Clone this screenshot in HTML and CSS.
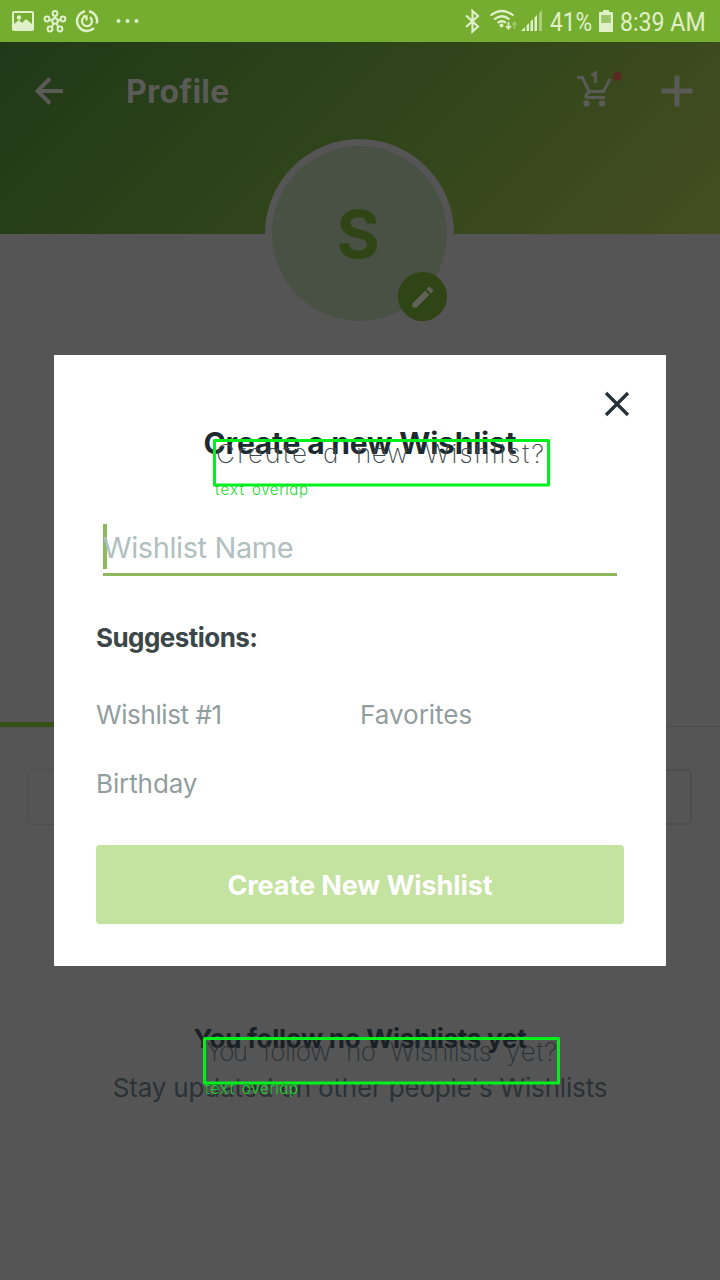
FILE: index.html
```html
<!DOCTYPE html>
<html lang="en">
<head>
<meta charset="utf-8">
<title>Profile</title>
<link rel="stylesheet" href="styles.css">
</head>
<body>
<div class="screen">
  <div class="statusbar">
    <svg class="status-left" width="145" height="42" viewBox="0 0 145 42">
      <g fill="none" stroke="currentColor" stroke-width="2">
        <rect x="13" y="12" width="20" height="18" rx="1"/>
        <circle cx="55" cy="21" r="2.8"/><circle cx="55" cy="13.500" r="2.400"/><circle cx="47" cy="19" r="2.400"/><circle cx="63" cy="19" r="2.400"/><circle cx="50" cy="29" r="2.400"/><circle cx="60" cy="29" r="2.400"/>
        <path d="M55 16v2M49.500 20l3 .5M60.500 20l-3 .5M51.500 27l2-3M58.500 27l-2-3"/>
        <path d="M85 11.200a10 10 0 1 0 9 17M89 11.200a10 10 0 0 1 7.800 12.300" stroke-width="2.500"/>
        <path d="M83.500 17.500a5 5 0 1 0 6.500-.3M83 16.500h3.500v4" stroke-width="2.300"/>
      </g>
      <path fill="currentColor" d="M14 28v-4l5-4 3 3 4-4 6 5v5H14z"/><circle cx="19" cy="17.500" r="2.200" fill="currentColor"/>
      <g fill="currentColor"><circle cx="118.500" cy="21" r="2"/><circle cx="127.500" cy="21" r="2"/><circle cx="136.500" cy="21" r="2"/></g>
    </svg>
    <div class="status-right">
      <svg width="80" height="42" viewBox="464 0 80 42">
        <path d="M466 15.500l12 11-5.500 5V11l5.500 5-12 11" fill="none" stroke="currentColor" stroke-width="2.200"/>
        <g fill="none" stroke="currentColor" stroke-width="2.200"><path d="M490.500 15.500q11.500-9 23 0M494 19.500q8-6.500 15.500 0M497.500 23q4.500-3.500 8.500 0"/></g>
        <circle cx="501.500" cy="25.500" r="1.900" fill="currentColor"/>
        <path d="M508.500 22v6M506 26l2.500 2.700L511 26" fill="none" stroke="currentColor" stroke-width="1.700"/>
        <path d="M514.500 29v-6M512.300 25l2.200-2.500 2.200 2.500" fill="none" stroke="currentColor" opacity=".4" stroke-width="1.500"/>
        <path fill="currentColor" d="M521 31l4-4v4zM526.500 25.500l2.500-2.500v8h-2.500zM530.500 21.500l2.500-2.500v12h-2.500zM534.500 17.500l2.500-2.500v16h-2.500z"/><path fill="currentColor" opacity=".5" d="M539 13l3-3v21h-3z"/>
      </svg>
      <span class="battery-text">41%</span>
      <svg class="battery" width="14" height="22" viewBox="0 0 14 22"><path fill="currentColor" d="M4 0h6v2h3a1 1 0 0 1 1 1v18a1 1 0 0 1-1 1H1a1 1 0 0 1-1-1V3a1 1 0 0 1 1-1h3z"/><path fill="#9cc56b" d="M2.200 5h9.600v8H2.200z"/></svg>
      <span class="clock">8:39 AM</span>
    </div>
  </div>

  <header class="header">
    <svg class="back" width="28" height="28" viewBox="0 0 28 28"><path d="M28 14H2.500M15 1.500L2.500 14 15 26.500" fill="none" stroke="currentColor" stroke-width="4"/></svg>
    <h1 class="title">Profile</h1>
    <svg class="cart" width="46" height="40" viewBox="576 70 46 40">
      <g fill="none" stroke="currentColor" stroke-width="3"><path d="M577 77.500h5.500l6.500 14h14.500l6.500-12.500"/><path d="M589 91.500l-3 4q-.8 2 1.500 2H605"/></g>
      <path fill="none" stroke="currentColor" stroke-width="3" d="M591.500 75.500l4-2.500V83"/>
      <circle cx="586.500" cy="103.500" r="3.200" fill="currentColor"/><circle cx="602" cy="103.500" r="3.200" fill="currentColor"/>
      <circle cx="617.500" cy="76.500" r="4.500" fill="#59291f"/>
    </svg>
    <svg class="plus" width="32" height="32" viewBox="0 0 32 32"><path d="M16 0.500v31M.5 16h31" stroke="currentColor" stroke-width="5"/></svg>
  </header>

  <main class="profile">
    <div class="avatar">S
      <div class="edit"><svg width="22" height="22" viewBox="0 0 22 22"><path fill="currentColor" d="M.5 17.200V21.500h4.300L17.300 9 13 4.700zM21 5.300q.7-.8 0-1.500L18.200 1q-.8-.7-1.500 0l-2.300 2.300 4.300 4.300z"/></svg></div>
    </div>
    <div class="tabs"><div class="tab tab-on"></div><div class="tab"></div></div>
    <div class="actions"><div class="action"></div><div class="action action-strong"></div></div>
    <h2 class="empty-title"><span>You follow no Wishlists yet</span></h2>
    <p class="empty-text"><span>Stay updated on other people's Wishlists</span></p>
  </main>

  <section class="modal">
    <svg class="close" width="26" height="26" viewBox="0 0 26 26"><path d="M2 2l22 22M24 2L2 24" stroke="currentColor" stroke-width="3.300"/></svg>
    <h2 class="modal-title"><span>Create a new Wishlist</span></h2>
    <div class="field"><span>Wishlist Name</span></div>
    <h3 class="suggest-title"><span>Suggestions:</span></h3>
    <div class="suggestions"><span class="s-one">Wishlist #1</span><span class="s-two">Favorites</span><span class="s-three">Birthday</span></div>
    <div class="create"><span>Create New Wishlist</span></div>
  </section>

  <svg class="marks" width="720" height="1280" viewBox="0 0 720 1280">
    <g fill="none" stroke="#00f21c" stroke-width="3" stroke-linejoin="round"><rect x="214.500" y="440.500" width="334" height="44.500"/><rect x="204.500" y="1038.500" width="354" height="44.500"/></g>
    <g class="mark-text">
      <text y="463"><tspan x="216" textLength="91">Create</tspan> <tspan x="323" textLength="16">a</tspan> <tspan x="356" textLength="52">new</tspan> <tspan x="425" textLength="119">Wishlist?</tspan></text>
      <text y="1061"><tspan x="206" textLength="42">You</tspan> <tspan x="263" textLength="68">follow</tspan> <tspan x="346" textLength="30">no</tspan> <tspan x="390" textLength="102">Wishlists</tspan> <tspan x="506" textLength="51">yet?</tspan></text>
    </g>
    <g class="mark-label">
      <text y="495"><tspan x="215" textLength="29">text</tspan> <tspan x="252" textLength="56">overlap</tspan></text>
      <text y="1094"><tspan x="205" textLength="29">text</tspan> <tspan x="242" textLength="56">overlap</tspan></text>
    </g>
  </svg>
</div>
</body>
</html>
```
FILE: styles.css
```css
* { box-sizing: border-box; margin: 0; }
body { margin: 0; font-family: Inter, "Liberation Sans", sans-serif; }
svg { display: block; flex: none; }
.screen { position: relative; width: 720px; height: 1280px; overflow: hidden; background: #555; display: flex; flex-direction: column; }
.statusbar { height: 42px; background: #75ad30; color: #e0f0c8; display: flex; justify-content: space-between; align-items: center; flex: none; }
.status-right { display: flex; align-items: center; padding-right: 15px; font: 26px/42px Roboto, sans-serif; }
.status-right span { display: block; white-space: nowrap; padding-top: 2px; transform-origin: left center; }
.battery-text { width: 42px; margin-left: 6px; transform: scaleX(.87); }
.battery { margin: 0 7px; }
.clock { width: 85px; transform: scaleX(.89); }
.header { height: 192px; flex: none; background: linear-gradient(135deg, #203918 0%, #2d431a 42%, #444e20 100%); color: #5a5a57; display: flex; align-items: flex-start; padding: 35px 27px 0 35px; }
.title { margin: -1px 0 0 63px; width: 120px; font-size: 32px; line-height: 31px; font-weight: 700; letter-spacing: .2px; }
.cart { margin: -7px 0 0 331px; }
.plus { margin: -2px 0 0 39px; }
.profile { display: flex; flex-direction: column; }
.avatar { position: relative; align-self: center; width: 189px; height: 189px; margin: -95px 1px 0 0; border: 7px solid #555; border-radius: 50%; background: #495044; color: #2f4515; display: flex; align-items: center; justify-content: center; font-size: 66px; font-weight: 700; padding: 1px 3px 0 0; }
.edit { position: absolute; right: 0; bottom: 0; width: 49px; height: 49px; border-radius: 50%; background: #2f4515; color: #5f6359; display: flex; align-items: center; justify-content: center; }
.tabs { display: flex; height: 5px; margin-top: 394px; }
.tab { flex: 1; border-bottom: 1px solid #484b4d; }
.tab-on { border: 0; background: #36501a; }
.actions { display: flex; gap: 24px; margin-top: 42px; padding: 0 28px; }
.action { flex: 1; height: 56px; border: 1px solid #4a4e51; border-radius: 5px; }
.action-strong { border: 2px solid #4a4e50; }
.empty-title, .empty-text { text-align: center; white-space: nowrap; }
.empty-title { margin-top: 198px; font-size: 26px; line-height: 32px; color: #192126; letter-spacing: -.27px; }
.empty-text { margin-top: 17px; font-size: 26px; line-height: 32px; color: #2b3236; letter-spacing: -.18px; }
.modal { position: absolute; left: 54px; top: 355px; width: 612px; height: 611px; background: #fff; padding: 36px 42px 42px; display: flex; flex-direction: column; }
.close { align-self: flex-end; margin-right: -6px; color: #263238; }
.modal-title { margin-top: 8px; text-align: center; font-size: 30px; line-height: 36px; color: #1c2b31; letter-spacing: -.2px; }
.field { margin: 63px 7px 0; height: 52px; border-bottom: 3px solid #8db85c; color: #b2bfc0; font-size: 29px; line-height: 47px; background: linear-gradient(#8db85c, #8db85c) 0 0 / 4px 45px no-repeat; letter-spacing: -.4px; }
.suggest-title { margin-top: 46px; font-size: 26px; line-height: 32px; color: #3b4648; letter-spacing: -.55px; }
.suggestions { display: grid; grid-template-columns: 1fr 1fr; margin-top: 45px; row-gap: 37px; font-size: 26px; line-height: 32px; color: #929d9e; }
.s-one { letter-spacing: -.4px; }
.s-three { letter-spacing: -.1px; }
.create { margin-top: auto; height: 79px; border-radius: 4px; background: #c4e2a0; color: #fff; display: flex; align-items: center; justify-content: center; font-size: 27px; font-weight: 700; letter-spacing: -.1px; padding-top: 2px; }
.marks { position: absolute; inset: 0; }
.mark-text, .mark-label { font-family: Inter, sans-serif; font-weight: 200; font-feature-settings: "cv11"; }
.mark-text { font-size: 26px; fill: #444b4e; }
.mark-text text + text { fill: #2b3134; }
.mark-label { font-size: 15px; font-weight: 300; fill: #19d82c; }
```
